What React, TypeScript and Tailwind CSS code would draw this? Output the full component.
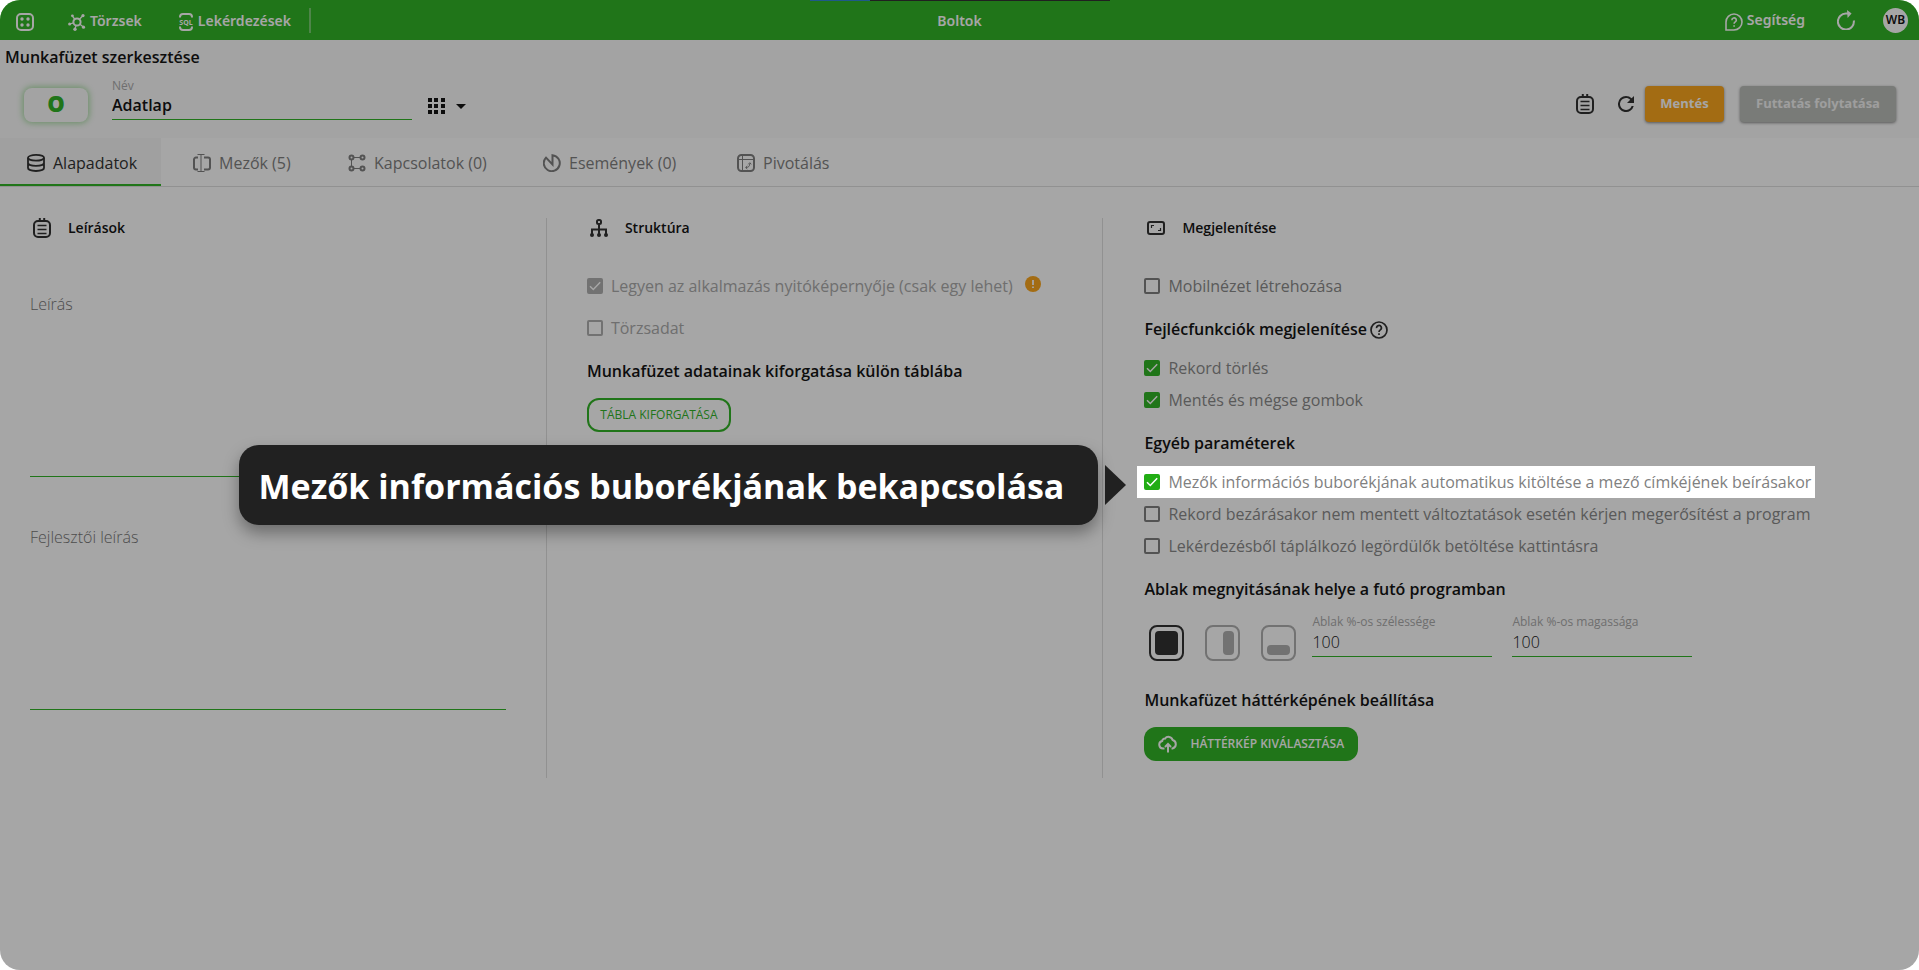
import React, { useState } from 'react';

interface IconProps {
  className?: string;
}

function AppsIcon() {
  return (
    <svg width="18" height="18" viewBox="0 0 18 18" fill="none">
      <rect x="1" y="1" width="16" height="16" rx="4" stroke="currentColor" strokeWidth="2" />
      <circle cx="6" cy="6" r="1.7" fill="currentColor" />
      <circle cx="12" cy="6" r="1.7" fill="currentColor" />
      <circle cx="6" cy="12" r="1.7" fill="currentColor" />
      <circle cx="12" cy="12" r="1.7" fill="currentColor" />
    </svg>
  );
}

function HubIcon() {
  return (
    <svg width="18" height="18" viewBox="0 0 18 18" fill="none" stroke="currentColor" strokeWidth="1.3">
      <circle cx="9" cy="9" r="3.6" strokeWidth="2" />
      <path d="M11.5 6.2 14.5 3M6.6 6 4.5 3.2M5.4 9.8 2 11M8 12.5 7 16M12 11.3l3 2.5" />
      <g fill="currentColor" stroke="none">
        <circle cx="15" cy="2.6" r="1.6" />
        <circle cx="4.4" cy="2.8" r="1.4" />
        <circle cx="1.6" cy="11" r="1.5" />
        <circle cx="7" cy="16.2" r="1.7" />
        <circle cx="15.5" cy="14.2" r="1.6" />
      </g>
    </svg>
  );
}

function SqlIcon() {
  return (
    <svg width="16" height="18" viewBox="0 0 16 18" fill="none">
      <path
        d="M2 4.5V4a3 3 0 0 1 3-3h6a3 3 0 0 1 3 3v.5M2 13.5v.5a3 3 0 0 0 3 3h6a3 3 0 0 0 3-3v-.5"
        stroke="currentColor"
        strokeWidth="2"
      />
      <text x="8" y="11.6" textAnchor="middle" fontSize="7" fontWeight="700" fill="currentColor">
        SQL
      </text>
    </svg>
  );
}

function HelpBubbleIcon() {
  return (
    <svg width="18" height="18" viewBox="0 0 18 18" fill="none" stroke="currentColor" strokeWidth="1.6">
      <path d="M1 17V9a8 8 0 1 1 8 8z" />
      <path d="M6.9 7.2a2.2 2.2 0 1 1 3.4 1.7c-.8.5-1.2.9-1.2 1.8M9.1 12.2v1.6" />
    </svg>
  );
}

function RotateIcon() {
  return (
    <svg width="18" height="20" viewBox="0 0 18 20" fill="none">
      <path d="M16.8 10.5A8 8 0 1 1 9 3.6h3" stroke="currentColor" strokeWidth="2" />
      <path d="M10 0l4.6 3.6L10.6 8z" fill="currentColor" />
    </svg>
  );
}

function NotesIcon() {
  return (
    <svg width="18" height="20" viewBox="0 0 18 20" fill="none" stroke="currentColor" strokeWidth="2">
      <rect x="1" y="3" width="16" height="16" rx="4" />
      <path d="M4.5 7.5h9M4.5 11.5h9M4.5 15.5h9" strokeWidth="1.7" />
      <path d="M6.8 0v3M11.2 0v3" />
    </svg>
  );
}

function RefreshIcon() {
  return (
    <svg width="16" height="16" viewBox="4 4 16 16" fill="currentColor">
      <path d="M17.65 6.35A7.96 7.96 0 0 0 12 4a8 8 0 1 0 7.73 10h-2.08A6 6 0 1 1 12 6c1.66 0 3.14.69 4.22 1.78L13 11h7V4z" />
    </svg>
  );
}

function GridIcon() {
  return (
    <svg width="17" height="16" viewBox="0 0 17 16" fill="currentColor">
      {[0, 6, 12].map((y) => [0, 6, 13].map((x) => <rect key={`${x}-${y}`} x={x} y={y} width="4" height="4" />))}
    </svg>
  );
}

function DatabaseIcon() {
  return (
    <svg width="18" height="18" viewBox="0 0 18 18" fill="none" stroke="currentColor" strokeWidth="1.8">
      <ellipse cx="9" cy="3.8" rx="8" ry="2.9" />
      <path d="M1 3.8v10.3C1 15.8 4.6 17 9 17s8-1.2 8-2.9V3.8M1 9c0 1.7 3.6 2.9 8 2.9S17 10.700 17 9" />
    </svg>
  );
}

function FieldIcon() {
  return (
    <svg width="18" height="18" viewBox="0 0 18 18" fill="none" stroke="currentColor">
      <path d="M5 3.5H3a2 2 0 0 0-2 2v8a2 2 0 0 0 2 2h2M11 3.5h4a2 2 0 0 1 2 2v8a2 2 0 0 1-2 2h-4" strokeWidth="2" />
      <path d="M8 .5v17M4.5.5h7M4.5 17.5h7" />
    </svg>
  );
}

function LinkIcon() {
  return (
    <svg width="18" height="18" viewBox="0 0 18 18" fill="none" stroke="currentColor">
      <path d="M3.5 5.5v7M6 3.5h6M6 14.5h6" />
      <g strokeWidth="2">
        <circle cx="3.500" cy="3.5" r="2" />
        <circle cx="14.5" cy="3.5" r="2" />
        <circle cx="3.5" cy="14.5" r="2" />
        <circle cx="14.5" cy="14.5" r="2" />
      </g>
    </svg>
  );
}

function EventIcon() {
  return (
    <svg width="18" height="18" viewBox="0 0 18 18" fill="none" stroke="currentColor" strokeWidth="2">
      <path d="M9.5 10.5V1.2A8 8 0 1 1 3 3.6z" />
    </svg>
  );
}

function PivotIcon() {
  return (
    <svg width="18" height="18" viewBox="0 0 18 18" fill="none" stroke="currentColor">
      <rect x="1" y="1" width="16" height="16" rx="3.5" strokeWidth="2" />
      <path d="M5.5 1v16M1 5.5h16" strokeWidth="1" />
      <path d="M9 13.5c2.5 0 3.800-1.300 3.800-4M11.300 10.300l1.500-1.600 1.500 1.600M10.300 12l-1.700 1.500 1.700 1.500" strokeWidth="1" />
    </svg>
  );
}

function TreeIcon() {
  return (
    <svg width="18" height="18" viewBox="0 0 18 18" fill="none" stroke="currentColor" strokeWidth="2">
      <rect x="7" y="1" width="4" height="4" rx="1.5" />
      <path d="M9 5v11M2 16v-5.5h14V16" />
      <g fill="currentColor" stroke="none">
        <circle cx="2" cy="16" r="2" />
        <circle cx="9" cy="16" r="2" />
        <circle cx="16" cy="16" r="2" />
      </g>
    </svg>
  );
}

function ScreenIcon() {
  return (
    <svg width="18" height="14" viewBox="0 0 18 14" fill="none" stroke="currentColor">
      <rect x="1" y="1" width="16" height="12" rx="2" strokeWidth="2" />
      <path d="M4.5 7V4.5H7M13.5 7v2.5H11" strokeWidth="1.2" />
    </svg>
  );
}

function QuestionIcon() {
  return (
    <svg width="18" height="18" viewBox="0 0 18 18" fill="none" stroke="currentColor" strokeWidth="1.7">
      <circle cx="9" cy="9" r="8" />
      <path d="M6.6 7.1a2.4 2.4 0 1 1 3.7 1.8C9.4 9.5 9 9.9 9 10.9M9 12.3V14" />
    </svg>
  );
}

function WarningIcon({ className }: IconProps) {
  return (
    <svg className={className} width="16" height="16" viewBox="0 0 16 16">
      <circle cx="8" cy="8" r="8" fill="#fb9f0b" />
      <path d="M8 4v5M8 10.5v1.6" stroke="#fff" strokeWidth="1.8" />
    </svg>
  );
}

function CloudUploadIcon() {
  return (
    <svg width="20" height="18" viewBox="0 0 20 18" fill="none" stroke="currentColor" strokeWidth="2">
      <path d="M6.5 13.5H5a3.8 3.8 0 0 1-.8-7.5A2.6 2.6 0 0 1 7 3.6 4.3 4.3 0 0 1 14.6 5 4.4 4.4 0 0 1 14.5 13.5h-1" />
      <path d="M10 17.5V9.5M7 12l3-3 3 3" />
    </svg>
  );
}

const tabs = [
  { label: 'Alapadatok', Icon: DatabaseIcon, size: 'w-[161px] pl-[27px]' },
  { label: 'Mezők (5)', Icon: FieldIcon, size: 'w-[160px] pl-8' },
  { label: 'Kapcsolatok (0)', Icon: LinkIcon, size: 'w-[195px] pl-[27px]' },
  { label: 'Események (0)', Icon: EventIcon, size: 'w-[189px] pl-[27px]' },
  { label: 'Pivotálás', Icon: PivotIcon, size: 'w-[160px] pl-8' },
];

interface CheckProps {
  label: string;
  checked?: boolean;
  disabled?: boolean;
}

function Check({ label, checked = false, disabled = false }: CheckProps) {
  return (
    <label className={`flex h-8 items-center gap-2 whitespace-nowrap ${disabled ? 'text-[#a3a3a3]' : 'text-[#808080]'}`}>
      <span className="grid size-4 shrink-0 place-items-center">
        <input
          type="checkbox"
          defaultChecked={checked}
          disabled={disabled}
          className="peer col-start-1 row-start-1 size-4 appearance-none rounded-[2px] border-2 border-[#757575] checked:border-[#21ad14] checked:bg-[#21ad14] disabled:border-[#a8a8a8] disabled:checked:border-[#a8a8a8] disabled:checked:bg-[#a8a8a8]"
        />
        <svg
          className="pointer-events-none invisible col-start-1 row-start-1 peer-checked:visible"
          width="12"
          height="10"
          viewBox="0 0 12 10"
          fill="none"
        >
          <path d="M1 5.2 4.3 8.5 11.2 1.2" stroke="#fff" strokeWidth="1.5" />
        </svg>
      </span>
      {label}
    </label>
  );
}

function SectionTitle({ icon, children }: { icon: React.ReactNode; children: React.ReactNode }) {
  return (
    <h2 className="flex h-5 items-center gap-[14px] text-sm font-semibold text-black">
      <span className="flex w-6 justify-center text-[#212121]">{icon}</span>
      {children}
    </h2>
  );
}

function SubTitle({ children }: { children: React.ReactNode }) {
  return <h3 className="mt-[15px] flex h-6 items-center gap-[3px] whitespace-nowrap font-semibold text-black">{children}</h3>;
}

function SizeField({ id, label }: { id: string; label: string }) {
  return (
    <div className="flex w-[180px] flex-col">
      <label htmlFor={id} className="text-xs leading-4 text-[#a3a3a3]">
        {label}
      </label>
      <input id={id} defaultValue="100" className="h-[27px] border-b border-[#21ad14] bg-transparent pb-0.5 font-light text-black outline-none" />
    </div>
  );
}

function DescriptionField({ id, label }: { id: string; label: string }) {
  return (
    <div className="flex flex-col">
      <label htmlFor={id} className="font-light leading-6 text-[#6b6b6b]">
        {label}
      </label>
      <textarea id={id} className="h-[161px] resize-none border-b border-[#21ad14] bg-transparent outline-none" />
    </div>
  );
}

// Inner block shows where the window opens: full, right side, bottom
const placements = [
  { id: 'full', title: 'Teljes', block: 'size-6' },
  { id: 'right', title: 'Jobb oldal', block: 'ml-3 h-6 w-3' },
  { id: 'bottom', title: 'Alul', block: 'mt-3.5 h-2.5 w-6' },
];

function TopBar() {
  return (
    <header className="relative flex h-10 items-center bg-[#21ad14] px-4 font-['Noto_Sans',sans-serif] text-sm font-semibold text-white">
      <div className="absolute inset-x-0 top-0 flex h-px justify-center">
        <div className="w-15 bg-[#1f7fd0]" />
        <div className="w-60 bg-[#212121]" />
      </div>
      <div className="flex flex-1 items-center pt-1">
        <button aria-label="Alkalmazások">
          <AppsIcon />
        </button>
        <a href="#torzsek" className="ml-[34px] flex items-center gap-1">
          <HubIcon />
          <span className="-mt-0.5">Törzsek</span>
        </a>
        <a href="#lekerdezesek" className="ml-9 flex items-center gap-1">
          <SqlIcon />
          <span className="-mt-0.5">Lekérdezések</span>
        </a>
        <div className="-mt-1 ml-[18px] h-[25px] w-0.5 bg-white/35" />
      </div>
      <h1 className="pt-0.5">Boltok</h1>
      <div className="flex flex-1 items-center justify-end">
        <a href="#segitseg" className="flex items-center gap-1">
          <span className="pt-1">
            <HelpBubbleIcon />
          </span>
          Segítség
        </a>
        <button aria-label="Újratöltés" className="ml-8">
          <RotateIcon />
        </button>
        <button className="-mr-[5px] ml-7 size-[25px] rounded-full bg-white text-xs font-semibold text-black">WB</button>
      </div>
    </header>
  );
}

export default function App() {
  const [activeTab, setActiveTab] = useState('Alapadatok');
  const [placement, setPlacement] = useState('full');

  return (
    <div className="min-h-screen overflow-hidden rounded-[20px] bg-white font-['Open_Sans',sans-serif] text-base text-black">
      <TopBar />

      <div className="bg-[#fafafa] pb-4">
        <div className="flex h-[34px] items-center px-[5px] font-semibold">Munkafüzet szerkesztése</div>
        <div className="flex items-end pl-6 pr-[23px] pt-1">
          <button className="h-[34px] w-16 rounded-lg bg-[#fafafa] pb-1 text-[22px] font-extrabold leading-[30px] text-[#21ad14] shadow-[0_0_6px_1px_rgba(33,173,20,0.45)]">
            O
          </button>
          <div className="mb-0.5 ml-6 flex h-[42px] w-[300px] flex-col">
            <label htmlFor="nev" className="text-xs leading-4 text-[#a3a3a3]">
              Név
            </label>
            <input id="nev" defaultValue="Adatlap" className="h-[26px] border-b border-[#21ad14] bg-transparent pb-1 font-semibold outline-none" />
          </div>
          <button aria-label="Ikon" className="ml-4 flex h-8 items-center gap-[11px]">
            <GridIcon />
            <svg width="10" height="5" viewBox="0 0 10 5">
              <path d="M0 0h10L5 5z" fill="currentColor" />
            </svg>
          </button>
          <div className="ml-auto flex h-9 items-center">
            <button aria-label="Jegyzetek" className="text-[#212121]">
              <NotesIcon />
            </button>
            <button aria-label="Frissítés" className="ml-6 text-[#212121]">
              <RefreshIcon />
            </button>
            <button className="ml-[11px] h-9 w-[79px] rounded bg-[#fb9f0b] text-[13px] font-bold text-white shadow-[0_1px_3px_rgba(0,0,0,0.5)]">
              Mentés
            </button>
            <button className="ml-4 h-9 w-[156px] rounded bg-[#b5b8b3] text-[13px] font-bold text-[#f2f2f2] shadow-[0_1px_3px_rgba(0,0,0,0.5)]">
              Futtatás folytatása
            </button>
          </div>
        </div>
      </div>

      <nav className="flex border-b border-[#dcdcdc]">
        {tabs.map(({ label, Icon, size }) => (
          <button
            key={label}
            onClick={() => setActiveTab(label)}
            className={`flex h-12 items-center gap-2 border-b-2 pt-1 ${size} ${
              activeTab === label ? 'border-[#21ad14] bg-[#f5f5f5] text-[#212121]' : 'border-transparent text-[#757575]'
            }`}
          >
            <Icon />
            <span className="whitespace-nowrap">{label}</span>
          </button>
        ))}
      </nav>

      <main className="flex pt-[31px]">
        <section className="w-[28.5%] border-r border-[#dcdcdc] pl-[30px] pr-10">
          <SectionTitle icon={<NotesIcon />}>Leírások</SectionTitle>
          <div className="mt-[54px] flex flex-col gap-12">
            <DescriptionField id="leiras" label="Leírás" />
            <DescriptionField id="fejlesztoi" label="Fejlesztői leírás" />
          </div>
        </section>

        <section className="w-[29%] border-r border-[#dcdcdc] pl-10">
          <SectionTitle icon={<TreeIcon />}>Struktúra</SectionTitle>
          <div className="mt-8 flex items-center gap-3">
            <Check label="Legyen az alkalmazás nyitóképernyője (csak egy lehet)" checked disabled />
            <WarningIcon className="mb-1" />
          </div>
          <div className="mt-2.5">
            <Check label="Törzsadat" disabled />
          </div>
          <SubTitle>Munkafüzet adatainak kiforgatása külön táblába</SubTitle>
          <button className="mt-[15px] h-[34px] w-36 rounded-xl border-2 border-[#21ad14] text-xs text-[#21ad14]">
            TÁBLA KIFORGATÁSA
          </button>
        </section>

        <section className="h-[560px] flex-1 pl-[41px]">
          <SectionTitle icon={<ScreenIcon />}>Megjelenítése</SectionTitle>
          <div className="mt-8">
            <Check label="Mobilnézet létrehozása" />
          </div>

          <SubTitle>
            Fejlécfunkciók megjelenítése
            <span className="pt-0.5 text-[#212121]">
              <QuestionIcon />
            </span>
          </SubTitle>
          <div className="mt-[11px]">
            <Check label="Rekord törlés" checked />
            <Check label="Mentés és mégse gombok" checked />
          </div>

          <SubTitle>Egyéb paraméterek</SubTitle>
          <div className="mt-[11px]">
            {/* Highlighted step: the spread shadow dims the rest of the page */}
            <div className="relative z-10 -ml-[7px] w-fit bg-white pl-[7px] pr-1 shadow-[0_0_0_100vmax_rgba(33,33,33,0.4)]">
              <Check label="Mezők információs buborékjának automatikus kitöltése a mező címkéjének beírásakor" checked />
              <div role="tooltip" className="absolute -top-[21px] right-full mr-[11px] flex items-center gap-[7px]">
                <div className="flex h-20 items-center whitespace-nowrap rounded-[20px] bg-[#212121] pl-5 pr-[34px] pt-0.5 text-[34px] font-bold text-white shadow-[0_8px_16px_rgba(0,0,0,0.35)]">
                  Mezők információs buborékjának bekapcsolása
                </div>
                <svg width="21" height="40" viewBox="0 0 21 40">
                  <path d="M0 0 21 20 0 40z" fill="#212121" />
                </svg>
              </div>
            </div>
            <Check label="Rekord bezárásakor nem mentett változtatások esetén kérjen megerősítést a program" />
            <Check label="Lekérdezésből táplálkozó legördülők betöltése kattintásra" />
          </div>

          <SubTitle>Ablak megnyitásának helye a futó programban</SubTitle>
          <div className="ml-[5px] mt-[13px] flex items-start">
            <div className="mt-[11px] flex gap-[21px]">
              {placements.map(({ id, title, block }) => (
                <button
                  key={id}
                  aria-label={title}
                  onClick={() => setPlacement(id)}
                  className={`flex h-9 w-[35px] items-start rounded-lg border-2 p-1 ${
                    placement === id ? 'border-[#212121] text-[#212121]' : 'border-[#a8a8a8] text-[#a8a8a8]'
                  }`}
                >
                  <span className={`rounded bg-current ${block}`} />
                </button>
              ))}
            </div>
            <div className="ml-4 flex gap-5">
              <SizeField id="szelesseg" label="Ablak %-os szélessége" />
              <SizeField id="magassag" label="Ablak %-os magassága" />
            </div>
          </div>

          <h3 className="mt-[27px] flex h-6 items-center font-semibold">Munkafüzet háttérképének beállítása</h3>
          <button className="mt-[15px] flex h-[34px] items-center gap-3 rounded-xl bg-[#21ad14] px-3.5 text-xs font-semibold text-white">
            <CloudUploadIcon />
            HÁTTÉRKÉP KIVÁLASZTÁSA
          </button>
        </section>
      </main>
    </div>
  );
}
